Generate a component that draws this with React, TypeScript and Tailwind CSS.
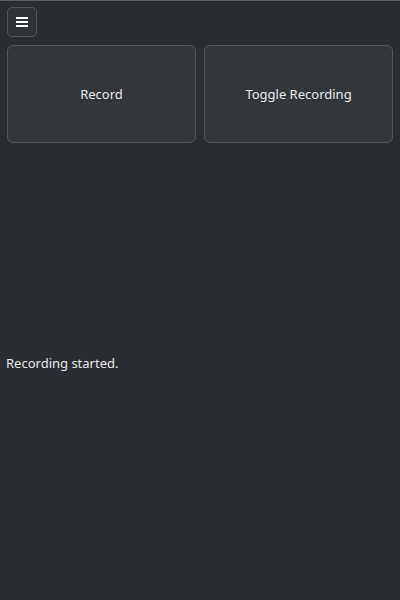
import React from "react";

export default function App() {
  return (
    <div
      className="w-[400px] h-[600px] bg-[#2a2d32] border-t border-[#5a5d61] flex flex-col text-[#e8e8e8]"
      style={{ fontFamily: '"Noto Sans", "Open Sans", sans-serif' }}
    >
      <div className="pt-[6px] pl-[7px]">
        <button className="w-[30px] h-[30px] rounded-[5px] border border-[#54575c] bg-[#2f3237] flex flex-col items-center justify-center gap-[2px]">
          <span className="block w-[12px] h-[2px] bg-white" />
          <span className="block w-[12px] h-[2px] bg-white" />
          <span className="block w-[12px] h-[2px] bg-white" />
        </button>
      </div>
      <div className="flex gap-[8px] px-[7px] pt-[8px]">
        <button className="w-[189px] h-[98px] pt-[2px] rounded-[6px] border border-[#54575c] bg-[#33373c] text-[13px] text-[#e8e8e8]">
          Record
        </button>
        <button className="w-[189px] h-[98px] pt-[2px] rounded-[6px] border border-[#54575c] bg-[#33373c] text-[13px] text-[#e8e8e8]">
          Toggle Recording
        </button>
      </div>
      <div className="pt-[211px] pl-[6px] text-[13px] leading-[18px]">Recording started.</div>
    </div>
  );
}
